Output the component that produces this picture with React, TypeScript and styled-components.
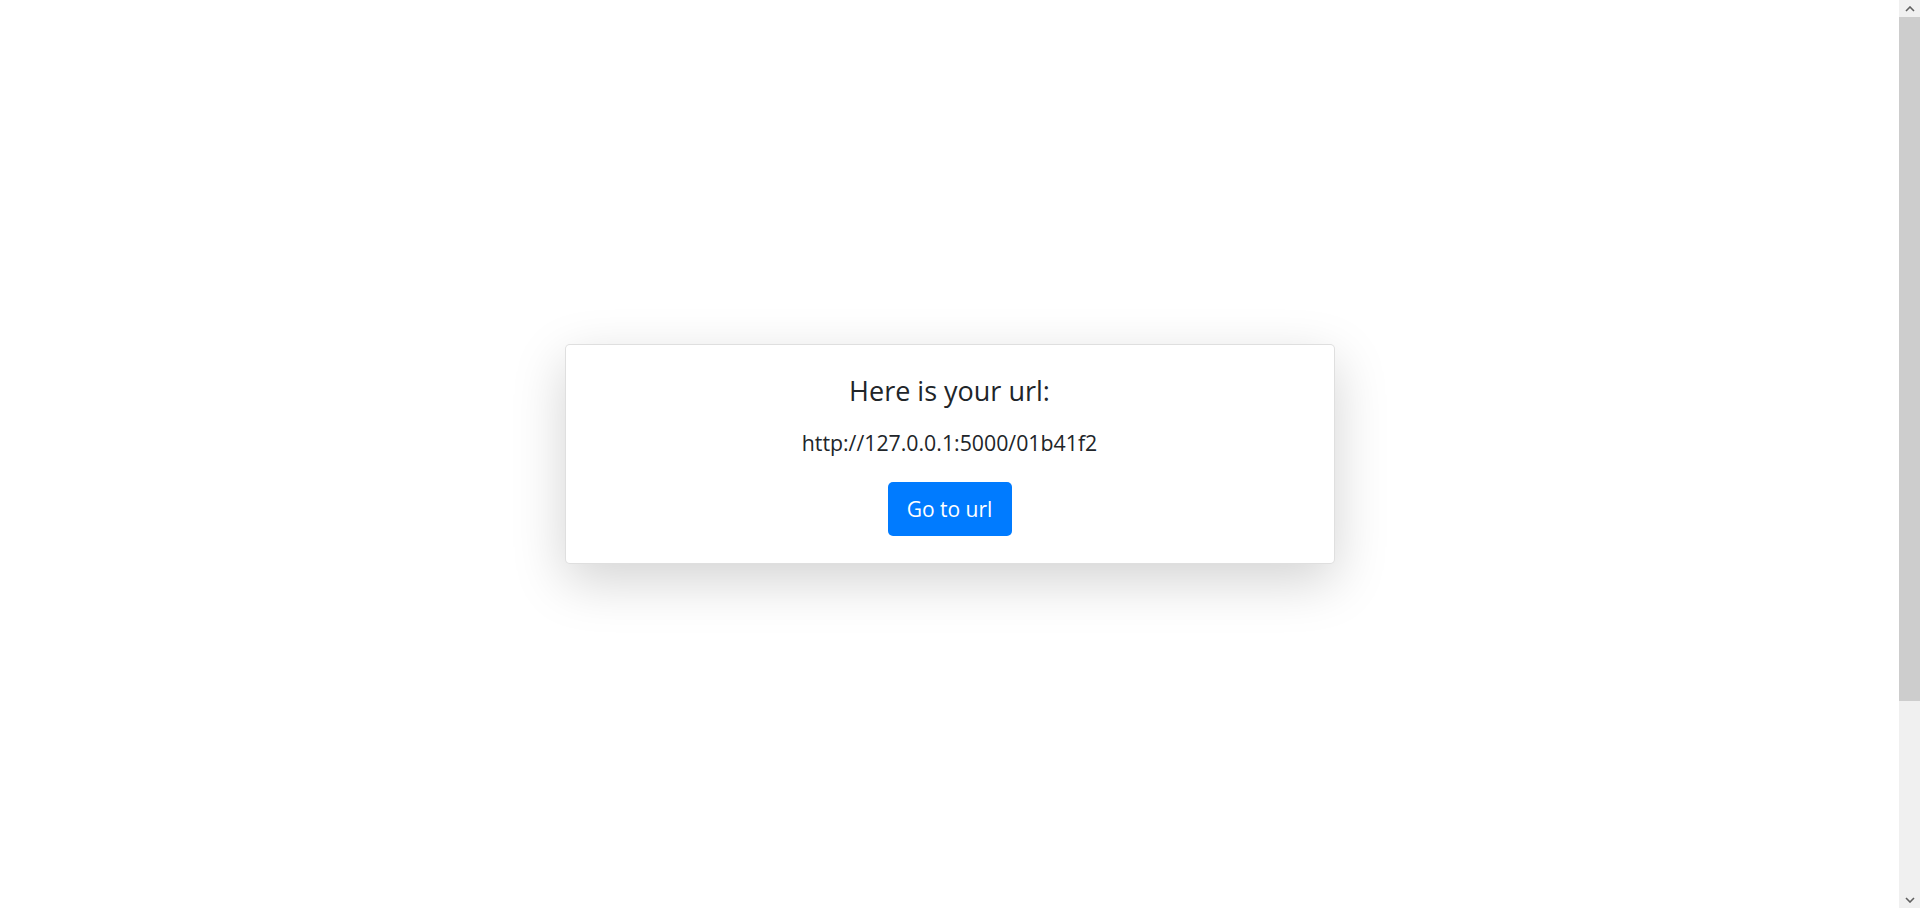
import React from "react";
import styled, { createGlobalStyle } from "styled-components";

const GlobalStyle = createGlobalStyle`
  html, body {
    margin: 0;
    padding: 0;
    background: #ffffff;
  }
  body {
    font-family: "Segoe UI", "Open Sans", "Noto Sans", sans-serif;
    color: #212529;
  }
  * { box-sizing: border-box; }
`;

const Screen = styled.main`
  height: 908px;
  display: flex;
  align-items: center;
  justify-content: center;
  padding-right: 21px;
`;

const Below = styled.div`
  height: 252px;
`;

const Card = styled.section`
  width: 770px;
  height: 220px;
  background: #fff;
  border: 1px solid rgba(0, 0, 0, 0.125);
  border-radius: 5px;
  box-shadow: 0 17px 53px rgba(0, 0, 0, 0.175);
  padding: 27px 27px 27px;
  display: flex;
  flex-direction: column;
  align-items: center;
`;

const Title = styled.h3`
  margin: 0;
  font-size: 27px;
  font-weight: 400;
  line-height: 37px;
  color: #212529;
`;

const Url = styled.p`
  margin: 20px 0 0;
  font-size: 21.3px;
  line-height: 28px;
  color: #212529;
`;

const GoButton = styled.a`
  margin-top: 25px;
  display: inline-flex;
  align-items: center;
  justify-content: center;
  width: 124px;
  height: 54px;
  background: #007bff;
  color: #fff;
  border-radius: 5px;
  font-size: 21px;
  text-decoration: none;
  cursor: pointer;
`;

/* Imitation of the browser's classic scrollbar seen in the screenshot */
const ScrollBar = styled.div`
  position: fixed;
  top: 0;
  right: 0;
  width: 21px;
  height: 908px;
  background: #f0f0f0;
  display: flex;
  flex-direction: column;
`;

const ScrollArrow = styled.div`
  height: 17px;
  display: flex;
  align-items: center;
  justify-content: center;
  flex: none;
`;

const ScrollThumb = styled.div`
  height: 684px;
  background: #cdcdcd;
  flex: none;
`;

const ScrollRest = styled.div`
  flex: 1;
`;

const Chevron = ({ down }: { down?: boolean }) => (
  <svg width="10" height="6" viewBox="0 0 10 6">
    <path
      d={down ? "M1 1 L5 5 L9 1" : "M1 5 L5 1 L9 5"}
      fill="none"
      stroke="#606060"
      strokeWidth="1.6"
    />
  </svg>
);

export default function App() {
  return (
    <>
      <GlobalStyle />
      <Screen>
        <Card>
          <Title>Here is your url:</Title>
          <Url>http://127.0.0.1:5000/01b41f2</Url>
          <GoButton href="#">Go to url</GoButton>
        </Card>
      </Screen>
      <Below />
      <ScrollBar>
        <ScrollArrow>
          <Chevron />
        </ScrollArrow>
        <ScrollThumb />
        <ScrollRest />
        <ScrollArrow>
          <Chevron down />
        </ScrollArrow>
      </ScrollBar>
    </>
  );
}
